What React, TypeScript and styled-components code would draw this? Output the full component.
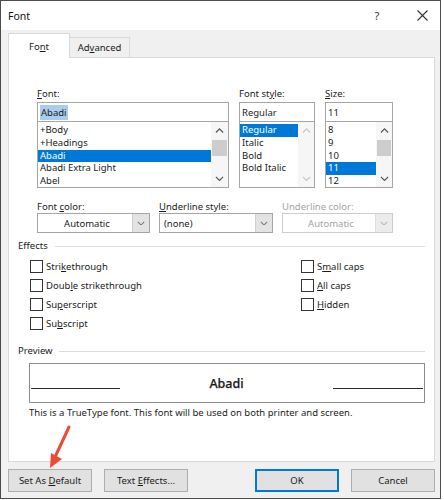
import React from 'react';
import styled, { createGlobalStyle, css } from 'styled-components';

const GlobalStyle = createGlobalStyle`
  html, body {
    margin: 0;
    padding: 0;
    background: #fff;
  }
  body {
    font-family: 'Noto Sans', 'Open Sans', sans-serif;
    font-size: 9.5px;
    color: #1b1b1b;
  }
  * {
    box-sizing: border-box;
  }
`;

// Window frame
const Window = styled.div`
  position: relative;
  width: 441px;
  height: 499px;
  border: 1px solid #4c4c4c;
  display: flex;
  flex-direction: column;
  background: #f0f0f0;
`;

const TitleBar = styled.div`
  height: 29px;
  background: #fff;
  display: flex;
  align-items: center;
  padding-left: 7px;
  font-size: 10.5px;
  color: #111;
`;

const TitleText = styled.span`
  flex: 1;
`;

const TitleButton = styled.div<{ $w: number }>`
  width: ${(p) => p.$w}px;
  height: 29px;
  display: flex;
  align-items: center;
  justify-content: center;
  font-size: 11px;
  color: #333;
`;

const Body = styled.div`
  flex: 1;
  display: flex;
  flex-direction: column;
  padding: 0 5px 6px 7px;
`;

const TabStrip = styled.div`
  height: 27px;
  display: flex;
  align-items: flex-end;
`;

const Tab = styled.div<{ $active?: boolean; $w: number }>`
  width: ${(p) => p.$w}px;
  display: flex;
  align-items: center;
  justify-content: center;
  border: 1px solid #d9d9d9;
  border-bottom: none;
  ${(p) =>
    p.$active
      ? css`
          height: 25px;
          background: #fff;
          position: relative;
          z-index: 1;
          margin-bottom: -1px;
        `
      : css`
          height: 20px;
          background: #f0f0f0;
          border-left: none;
        `}
`;

const Panel = styled.div`
  height: 405px;
  background: #fff;
  border: 1px solid #d9d9d9;
  padding: 30px 9px 0 9px;
  display: flex;
  flex-direction: column;
`;

const FieldsGrid = styled.div<{ $cols: string; $gap: number; $top?: number }>`
  display: grid;
  grid-template-columns: ${(p) => p.$cols};
  column-gap: ${(p) => p.$gap}px;
  margin-left: 19px;
  margin-top: ${(p) => p.$top ?? 0}px;
`;

const Field = styled.div`
  display: flex;
  flex-direction: column;
`;

const Label = styled.div<{ $disabled?: boolean }>`
  height: 12px;
  line-height: 12px;
  margin-bottom: 2px;
  color: ${(p) => (p.$disabled ? '#a3a3a3' : '#1b1b1b')};
  white-space: nowrap;
`;

const TextBox = styled.div`
  height: 20px;
  border: 1px solid #a5a5a5;
  display: flex;
  align-items: center;
  padding-left: 2px;
`;

const Selected = styled.span`
  background: #a8cdef;
  padding: 1px 1px;
`;

const ListBox = styled.div`
  height: 67px;
  margin-top: -1px;
  border: 1px solid #a5a5a5;
  display: flex;
`;

const Items = styled.div`
  flex: 1;
  padding-top: 2px;
  overflow: hidden;
`;

const Item = styled.div<{ $selected?: boolean }>`
  height: 12.8px;
  line-height: 12.8px;
  padding-left: 2px;
  white-space: nowrap;
  ${(p) =>
    p.$selected &&
    css`
      background: #0078d7;
      color: #fff;
    `}
`;

const ScrollBar = styled.div<{ $w: number }>`
  width: ${(p) => p.$w}px;
  background: #f6f6f6;
  display: flex;
  flex-direction: column;
  justify-content: space-between;
`;

const ScrollArrow = styled.div<{ $disabled?: boolean }>`
  height: 17px;
  display: flex;
  align-items: center;
  justify-content: center;
  color: ${(p) => (p.$disabled ? '#c6c6c6' : '#555')};
`;

const ScrollTrack = styled.div`
  flex: 1;
  padding: 1px 1px 0 1px;
`;

const Thumb = styled.div`
  height: 16px;
  background: #cdcdcd;
`;

const Combo = styled.div<{ $disabled?: boolean }>`
  height: 20px;
  margin-top: -2px;
  border: 1px solid ${(p) => (p.$disabled ? '#cccccc' : '#a5a5a5')};
  background: #fff;
  display: flex;
  color: ${(p) => (p.$disabled ? '#a3a3a3' : '#1b1b1b')};
`;

const ComboText = styled.div<{ $center?: boolean }>`
  flex: 1;
  display: flex;
  align-items: center;
  justify-content: ${(p) => (p.$center ? 'center' : 'flex-start')};
  padding-left: 4px;
`;

const ComboButton = styled.div<{ $disabled?: boolean }>`
  width: 17px;
  background: ${(p) => (p.$disabled ? '#ececec' : '#e3e3e3')};
  border-left: 1px solid ${(p) => (p.$disabled ? '#dddddd' : '#cfcfcf')};
  display: flex;
  align-items: center;
  justify-content: center;
  color: ${(p) => (p.$disabled ? '#b5b5b5' : '#777')};
`;

const GroupHeader = styled.div<{ $top: number }>`
  margin-top: ${(p) => p.$top}px;
  height: 12px;
  line-height: 12px;
  display: flex;
  align-items: center;
`;

const GroupLine = styled.div<{ $left: number }>`
  flex: 1;
  height: 1px;
  background: #dcdcdc;
  margin-left: ${(p) => p.$left}px;
`;

const Effects = styled.div`
  margin-top: 5px;
  margin-left: 12px;
  display: grid;
  grid-template-columns: 271px auto;
  grid-template-rows: repeat(4, 19px);
  grid-auto-flow: column;
`;

const CheckRow = styled.label`
  display: flex;
  align-items: center;
  gap: 3px;
`;

const CheckBox = styled.span`
  width: 13px;
  height: 13px;
  border: 1px solid #333;
  background: #fff;
`;

const PreviewBox = styled.div`
  margin: 6px 0 0 11px;
  width: 396px;
  height: 40px;
  border: 1px solid #8c8c8c;
  padding: 0 1px;
  display: grid;
  grid-template-columns: 89px 1fr 90px;
  align-items: center;
`;

const PreviewLine = styled.div`
  height: 1px;
  background: #2b2b2b;
  margin-top: 10px;
`;

const PreviewText = styled.div`
  text-align: center;
  font-size: 12.5px;
  font-weight: 500;
  color: #1a1a1a;
  -webkit-text-stroke: 0.25px #1a1a1a;
`;

const Note = styled.div`
  margin: 4px 0 0 11px;
  height: 12px;
  line-height: 12px;
`;

const ButtonRow = styled.div`
  margin-top: 7px;
  display: flex;
  gap: 12px;
`;

const Button = styled.div<{ $primary?: boolean; $push?: boolean }>`
  width: 84px;
  height: 23px;
  display: flex;
  align-items: center;
  justify-content: center;
  background: #e1e1e1;
  border: ${(p) => (p.$primary ? '2px solid #0078d7' : '1px solid #adadad')};
  margin-left: ${(p) => (p.$push ? 'auto' : '0')};
`;

const Arrow = styled.svg`
  position: absolute;
  left: 0;
  top: 0;
  pointer-events: none;
`;

const Ul = styled.span`
  text-decoration: underline;
  text-underline-offset: 1px;
`;

function Chevron({ up, size = 9 }: { up?: boolean; size?: number }) {
  return (
    <svg width={size} height={size * 0.6} viewBox="0 0 10 6">
      <polyline
        points={up ? '1,5 5,1 9,5' : '1,1 5,5 9,1'}
        fill="none"
        stroke="currentColor"
        strokeWidth="1.3"
      />
    </svg>
  );
}

function List({
  items,
  selected,
  barWidth,
  thumb,
  disabled,
}: {
  items: string[];
  selected: number;
  barWidth: number;
  thumb?: boolean;
  disabled?: boolean;
}) {
  return (
    <ListBox>
      <Items>
        {items.map((it, i) => (
          <Item key={it} $selected={i === selected}>
            {it}
          </Item>
        ))}
      </Items>
      <ScrollBar $w={barWidth}>
        <ScrollArrow $disabled={disabled}>
          <Chevron up />
        </ScrollArrow>
        <ScrollTrack>{thumb && <Thumb />}</ScrollTrack>
        <ScrollArrow $disabled={disabled}>
          <Chevron />
        </ScrollArrow>
      </ScrollBar>
    </ListBox>
  );
}

export default function App() {
  return (
    <>
      <GlobalStyle />
      <Window>
        <TitleBar>
          <TitleText>Font</TitleText>
          <TitleButton $w={54}>?</TitleButton>
          <TitleButton $w={36}>
            <svg width="11" height="11" viewBox="0 0 11 11">
              <path d="M0.5 0.5 L10.5 10.5 M10.5 0.5 L0.5 10.5" stroke="#333" strokeWidth="1.1" />
            </svg>
          </TitleButton>
        </TitleBar>
        <Body>
          <TabStrip>
            <Tab $active $w={62}>
              <span>
                Fo<Ul>n</Ul>t
              </span>
            </Tab>
            <Tab $w={60}>
              <span>
                Ad<Ul>v</Ul>anced
              </span>
            </Tab>
          </TabStrip>
          <Panel>
            <FieldsGrid $cols="192px 76px 68px" $gap={10}>
              <Field>
                <Label>
                  <Ul>F</Ul>ont:
                </Label>
                <TextBox>
                  <Selected>Abadi</Selected>
                </TextBox>
                <List
                  items={['+Body', '+Headings', 'Abadi', 'Abadi Extra Light', 'Abel']}
                  selected={2}
                  barWidth={17}
                  thumb
                />
              </Field>
              <Field>
                <Label>
                  Font st<Ul>y</Ul>le:
                </Label>
                <TextBox>Regular</TextBox>
                <List
                  items={['Regular', 'Italic', 'Bold', 'Bold Italic']}
                  selected={0}
                  barWidth={16}
                  disabled
                />
              </Field>
              <Field>
                <Label>
                  <Ul>S</Ul>ize:
                </Label>
                <TextBox>11</TextBox>
                <List items={['8', '9', '10', '11', '12']} selected={3} barWidth={16} thumb />
              </Field>
            </FieldsGrid>

            <FieldsGrid $cols="113px 114px 111px" $gap={9} $top={13}>
              <Field>
                <Label>
                  Font <Ul>c</Ul>olor:
                </Label>
                <Combo>
                  <ComboText $center>Automatic</ComboText>
                  <ComboButton>
                    <Chevron size={8} />
                  </ComboButton>
                </Combo>
              </Field>
              <Field>
                <Label>
                  <Ul>U</Ul>nderline style:
                </Label>
                <Combo>
                  <ComboText>(none)</ComboText>
                  <ComboButton>
                    <Chevron size={8} />
                  </ComboButton>
                </Combo>
              </Field>
              <Field>
                <Label $disabled>Underline color:</Label>
                <Combo $disabled>
                  <ComboText $center>Automatic</ComboText>
                  <ComboButton $disabled>
                    <Chevron size={8} />
                  </ComboButton>
                </Combo>
              </Field>
            </FieldsGrid>

            <GroupHeader $top={7}>
              Effects
              <GroupLine $left={7} />
            </GroupHeader>
            <Effects>
              <CheckRow>
                <CheckBox />
                <span>
                  Stri<Ul>k</Ul>ethrough
                </span>
              </CheckRow>
              <CheckRow>
                <CheckBox />
                <span>
                  Doub<Ul>l</Ul>e strikethrough
                </span>
              </CheckRow>
              <CheckRow>
                <CheckBox />
                <span>
                  Su<Ul>p</Ul>erscript
                </span>
              </CheckRow>
              <CheckRow>
                <CheckBox />
                <span>
                  Su<Ul>b</Ul>script
                </span>
              </CheckRow>
              <CheckRow>
                <CheckBox />
                <span>
                  S<Ul>m</Ul>all caps
                </span>
              </CheckRow>
              <CheckRow>
                <CheckBox />
                <span>
                  <Ul>A</Ul>ll caps
                </span>
              </CheckRow>
              <CheckRow>
                <CheckBox />
                <span>
                  <Ul>H</Ul>idden
                </span>
              </CheckRow>
            </Effects>

            <GroupHeader $top={12}>
              Preview
              <GroupLine $left={6} />
            </GroupHeader>
            <PreviewBox>
              <PreviewLine />
              <PreviewText>Abadi</PreviewText>
              <PreviewLine />
            </PreviewBox>
            <Note>This is a TrueType font. This font will be used on both printer and screen.</Note>
          </Panel>
          <ButtonRow>
            <Button>
              <span>
                Set As <Ul>D</Ul>efault
              </span>
            </Button>
            <Button>
              <span>
                Text <Ul>E</Ul>ffects...
              </span>
            </Button>
            <Button $primary $push>
              OK
            </Button>
            <Button>Cancel</Button>
          </ButtonRow>
        </Body>
        <Arrow width="441" height="499" viewBox="0 0 441 499">
          <line x1="68" y1="426" x2="55" y2="454" stroke="#ec4a36" strokeWidth="3" strokeLinecap="round" />
          <polygon points="49,467 61,458 50,452" fill="#ec4a36" />
        </Arrow>
      </Window>
    </>
  );
}
